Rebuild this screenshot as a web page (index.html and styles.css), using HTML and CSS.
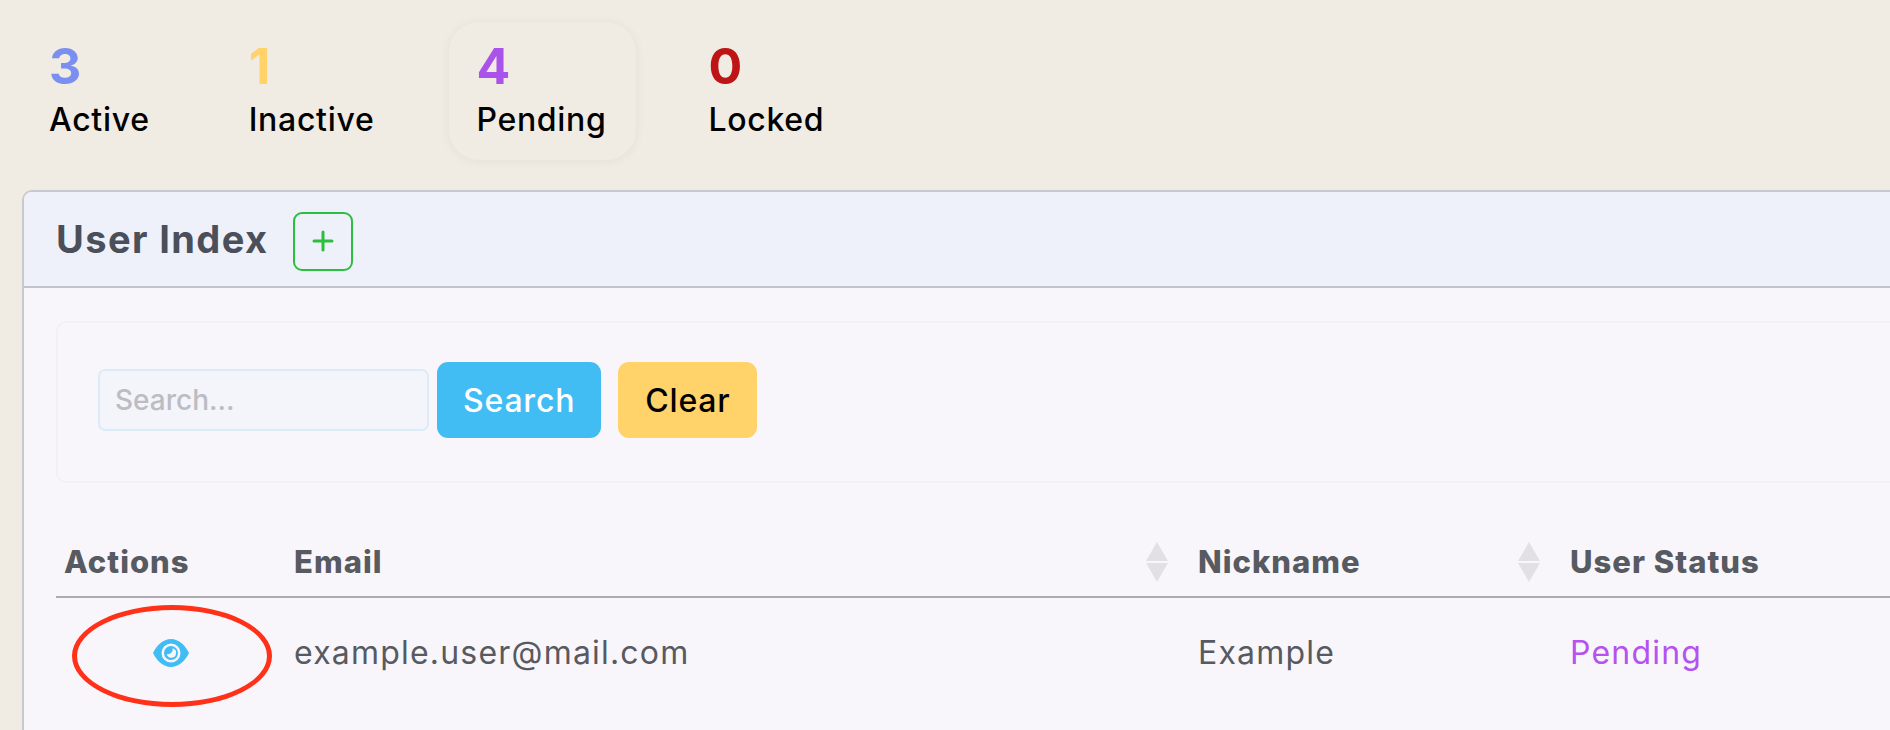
FILE: index.html
```html
<!DOCTYPE html>
<html lang="en">
<head>
  <meta charset="UTF-8" />
  <title>User Index</title>
  <link rel="stylesheet" href="styles.css">
</head>
<body>
  <div class="stats">
    <div class="stat">
      <div class="stat-num c-active">3</div>
      <div class="stat-label">Active</div>
    </div>
    <div class="stat">
      <div class="stat-num c-inactive">1</div>
      <div class="stat-label">Inactive</div>
    </div>
    <div class="stat stat-selected">
      <div class="stat-num c-pending">4</div>
      <div class="stat-label">Pending</div>
    </div>
    <div class="stat">
      <div class="stat-num c-locked">0</div>
      <div class="stat-label">Locked</div>
    </div>
  </div>

  <div class="panel">
    <div class="panel-head">
      <h1 class="panel-title">User Index</h1>
      <button class="add-btn" title="Add">
        <svg viewBox="0 0 24 24" class="add-icon"><path d="M12 3v18M3 12h18"/></svg>
      </button>
    </div>
    <div class="panel-body">
      <form class="filter">
        <input class="search-input" type="text" placeholder="Search...">
        <button class="btn btn-search" type="button">Search</button>
        <button class="btn btn-clear" type="button">Clear</button>
      </form>

      <table class="users">
        <colgroup>
          <col class="col-actions">
          <col class="col-email">
          <col class="col-nick">
          <col>
        </colgroup>
        <thead>
          <tr>
            <th>Actions</th>
            <th class="sortable">Email
              <svg class="sort" viewBox="0 0 22 40"><path d="M11 0l11 19H0zM0 21h22L11 40z"/></svg>
            </th>
            <th class="sortable">Nickname
              <svg class="sort" viewBox="0 0 22 40"><path d="M11 0l11 19H0zM0 21h22L11 40z"/></svg>
            </th>
            <th>User Status</th>
          </tr>
        </thead>
        <tbody>
          <tr>
            <td class="action-cell">
              <span class="marked">
                <svg class="eye" viewBox="0 0 36 28"><path fill-rule="evenodd" d="M18 0C26 0 32.500 6.500 36 14 32.500 21.500 26 28 18 28S3.500 21.500 0 14C3.500 6.500 10 0 18 0ZM18 4.500a9.500 9.500 0 1 0 0 19 9.500 9.500 0 0 0 0-19ZM18 7a7 7 0 1 1 0 14 7 7 0 0 1 0-14ZM19.500 9.200a4.800 4.800 0 0 1-5.800 5.800 4.800 4.800 0 1 0 5.800-5.800Z"/></svg>
              </span>
            </td>
            <td>example.user@mail.com</td>
            <td>Example</td>
            <td class="c-pending-soft">Pending</td>
          </tr>
        </tbody>
      </table>
    </div>
  </div>
</body>
</html>
```

FILE: styles.css
```css
* { box-sizing: border-box; margin: 0; padding: 0; }
html, body { height: 100%; overflow: hidden; }
body {
  background: #f0ebe3;
  font-family: Inter, "Open Sans", sans-serif;
  padding: 22px 0 0 22px;
  display: flex;
  flex-direction: column;
}

/* counters */
.stats { display: flex; flex: none; height: 138px; margin-bottom: 30px; }
.stat {
  padding: 14px 27px 0;
  border-radius: 30px;
  margin-right: 45px;
}
.stat-selected {
  min-width: 187px;
  margin-left: 3px;
  box-shadow: 0 1px 10px rgba(120,110,90,0.08);
}
.stat-num { font-size: 50px; font-weight: 700; line-height: 60px; }
.stat-label { font-size: 32px; font-weight: 500; color: #000; line-height: 42px; margin-top: 3px; letter-spacing: 0.7px; }
.c-active { color: #7a8ff0; }
.c-inactive { color: #ffd26a; }
.c-pending { color: #a953ea; }
.c-locked { color: #bd1515; }

/* panel */
.panel {
  flex: 1;
  overflow: hidden;
  background: #f8f6fa;
  border: 2px solid #c8c9ce;
  border-width: 2px 0 0 2px;
  border-radius: 10px 0 0 0;
}
.panel-head {
  background: #eef1fa;
  border-bottom: 2px solid #c3c4cb;
  height: 96px;
  padding: 0 0 0 32px;
  display: flex;
  align-items: center;
  gap: 25px;
}
.panel-title { font-size: 38px; font-weight: 700; color: #4a4f5a; letter-spacing: 1.4px; }
.add-btn {
  width: 60px; height: 59px;
  margin-top: 4px;
  background: transparent;
  border: 2px solid #2dbd3f;
  border-radius: 9px;
  display: flex; align-items: center; justify-content: center;
}
.add-icon { width: 24px; height: 24px; fill: none; stroke: #2dbd3f; stroke-width: 3; stroke-linecap: round; }

.panel-body { padding: 33px 0 0 32px; }

/* search form */
.filter {
  display: flex;
  align-items: center;
  height: 162px;
  padding: 0 0 4px 40px;
  border: 2px solid #f1f1f4;
  border-right: 0;
  border-radius: 10px 0 0 10px;
  margin-bottom: 48px;
}
.search-input {
  width: 331px; height: 62px;
  background: #f4f4fb;
  border: 2px solid #d9ecf9;
  border-radius: 7px;
  padding: 0 15px;
  font: 500 28px Inter, sans-serif;
  margin-right: 8px;
}
.search-input::placeholder { color: #bcbcc2; }
.btn {
  height: 76px;
  border: 0;
  border-radius: 11px;
  font: 500 32px Inter, sans-serif;
  letter-spacing: 0.8px;
  padding: 0 26px;
}
.btn-search { background: #42bdf3; color: #fff; margin-right: 17px; }
.btn-clear { background: #ffd26a; color: #000; padding: 0 27px; }

/* table */
.users { border-collapse: collapse; table-layout: fixed; width: 100%; }
.col-actions { width: 228px; }
.col-email { width: 904px; }
.col-nick { width: 372px; }
.users th {
  position: relative;
  text-align: left;
  font-size: 31px;
  font-weight: 800;
  letter-spacing: 1px;
  color: #575a61;
  height: 66px;
  padding: 0 10px 4px;
  border-bottom: 2px solid #adabb0;
}
.users th:first-child { padding-left: 8px; }
.users td {
  font-size: 32px;
  font-weight: 400;
  letter-spacing: 1.2px;
  color: #575a61;
  height: 110px;
  padding: 0 10px;
}
.users td.c-pending-soft { color: #b552f0; }
.sort {
  position: absolute;
  right: 20px; top: 11px;
  width: 22px; height: 40px;
  fill: #e2e0e5;
}
.users td.action-cell { padding-top: 6px; }
.marked {
  display: flex;
  align-items: center;
  justify-content: center;
  width: 200px; height: 102px;
  margin-left: 6px;
  border: 5px solid #ff3118;
  border-radius: 50%;
}
.eye { width: 36px; height: 28px; fill: #42bdf3; margin: 0 2px 6px 0; }
```
